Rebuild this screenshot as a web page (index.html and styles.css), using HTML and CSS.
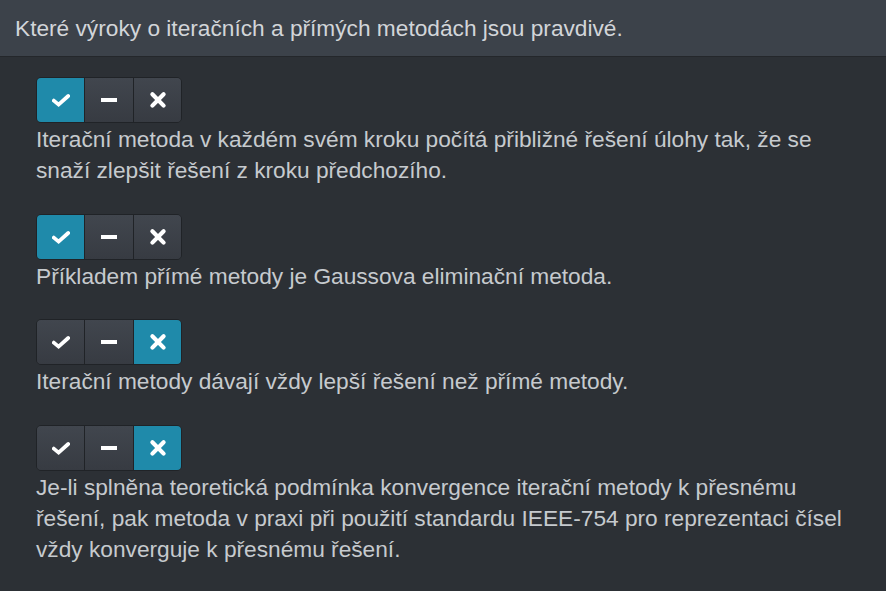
FILE: index.html
```html
<!DOCTYPE html>
<html lang="cs">
<head>
<meta charset="utf-8">
<link rel="stylesheet" href="styles.css">
</head>
<body>
<div class="header">Které výroky o iteračních a přímých metodách jsou pravdivé.</div>
<div class="list">
  <div class="item">
    <div class="group">
      <span class="btn on"><svg class="ic" viewBox="0 0 18 18"><path d="M1.8 9.6 L6.6 13.6 L16.2 5" /></svg></span>
      <span class="btn mid"><svg class="ic" viewBox="0 0 18 18"><path class="mn" d="M1 9 H17" /></svg></span>
      <span class="btn"><svg class="ic" viewBox="0 0 18 18"><path class="x" d="M3.4 3.2 L14.6 14.6 M14.6 3.2 L3.4 14.6" /></svg></span>
    </div>
    <p class="text">Iterační metoda v každém svém kroku počítá přibližné řešení úlohy tak, že se snaží zlepšit řešení z kroku předchozího.</p>
  </div>
  <div class="item">
    <div class="group">
      <span class="btn on"><svg class="ic" viewBox="0 0 18 18"><path d="M1.8 9.6 L6.6 13.6 L16.2 5" /></svg></span>
      <span class="btn mid"><svg class="ic" viewBox="0 0 18 18"><path class="mn" d="M1 9 H17" /></svg></span>
      <span class="btn"><svg class="ic" viewBox="0 0 18 18"><path class="x" d="M3.4 3.2 L14.6 14.6 M14.6 3.2 L3.4 14.6" /></svg></span>
    </div>
    <p class="text">Příkladem přímé metody je Gaussova eliminační metoda.</p>
  </div>
  <div class="item">
    <div class="group">
      <span class="btn"><svg class="ic" viewBox="0 0 18 18"><path d="M1.8 9.6 L6.6 13.6 L16.2 5" /></svg></span>
      <span class="btn mid"><svg class="ic" viewBox="0 0 18 18"><path class="mn" d="M1 9 H17" /></svg></span>
      <span class="btn on"><svg class="ic" viewBox="0 0 18 18"><path class="x" d="M3.4 3.2 L14.6 14.6 M14.6 3.2 L3.4 14.6" /></svg></span>
    </div>
    <p class="text">Iterační metody dávají vždy lepší řešení než přímé metody.</p>
  </div>
  <div class="item">
    <div class="group">
      <span class="btn"><svg class="ic" viewBox="0 0 18 18"><path d="M1.8 9.6 L6.6 13.6 L16.2 5" /></svg></span>
      <span class="btn mid"><svg class="ic" viewBox="0 0 18 18"><path class="mn" d="M1 9 H17" /></svg></span>
      <span class="btn on"><svg class="ic" viewBox="0 0 18 18"><path class="x" d="M3.4 3.2 L14.6 14.6 M14.6 3.2 L3.4 14.6" /></svg></span>
    </div>
    <p class="text">Je-li splněna teoretická podmínka konvergence iterační metody k přesnému řešení, pak metoda v praxi při použití standardu IEEE-754 pro reprezentaci čísel vždy konverguje k přesnému řešení.</p>
  </div>
</div>
</body>
</html>
```
FILE: styles.css
```css
html, body {
  margin: 0;
  padding: 0;
  background: #2c3035;
  font-family: "Liberation Sans", Arial, sans-serif;
  color: #c9cdd2;
}
.header {
  height: 57px;
  box-sizing: border-box;
  padding: 0 15px;
  display: flex;
  align-items: center;
  background: #3c424a;
  border-bottom: 1px solid #24272b;
  font-size: 22.7px;
  color: #d2d5d9;
}
.list {
  padding: 20px 36px 0;
  display: flex;
  flex-direction: column;
  gap: 27px;
}
.item {
  display: flex;
  flex-direction: column;
  align-items: flex-start;
}
.group {
  display: flex;
  border: 1px solid #202327;
  border-radius: 5px;
  overflow: hidden;
  height: 46px;
  box-sizing: border-box;
}
.btn {
  width: 47px;
  display: flex;
  align-items: center;
  justify-content: center;
  background: linear-gradient(#41464e, #373b42);
}
.btn.mid {
  width: 48px;
}
.btn + .btn {
  border-left: 1px solid #202327;
}
.btn.on {
  background: #1f8aaa;
}
.ic {
  width: 18px;
  height: 18px;
  fill: none;
  stroke: #ffffff;
  stroke-width: 3.8;
  stroke-linecap: round;
  stroke-linejoin: miter;
}
.ic .mn {
  stroke-width: 4;
  stroke-linecap: butt;
}
.ic .x {
  stroke-width: 4.2;
}
.text {
  margin: 1px 0 0;
  font-size: 22.7px;
  line-height: 31.4px;
  color: #c6cace;
}
```
